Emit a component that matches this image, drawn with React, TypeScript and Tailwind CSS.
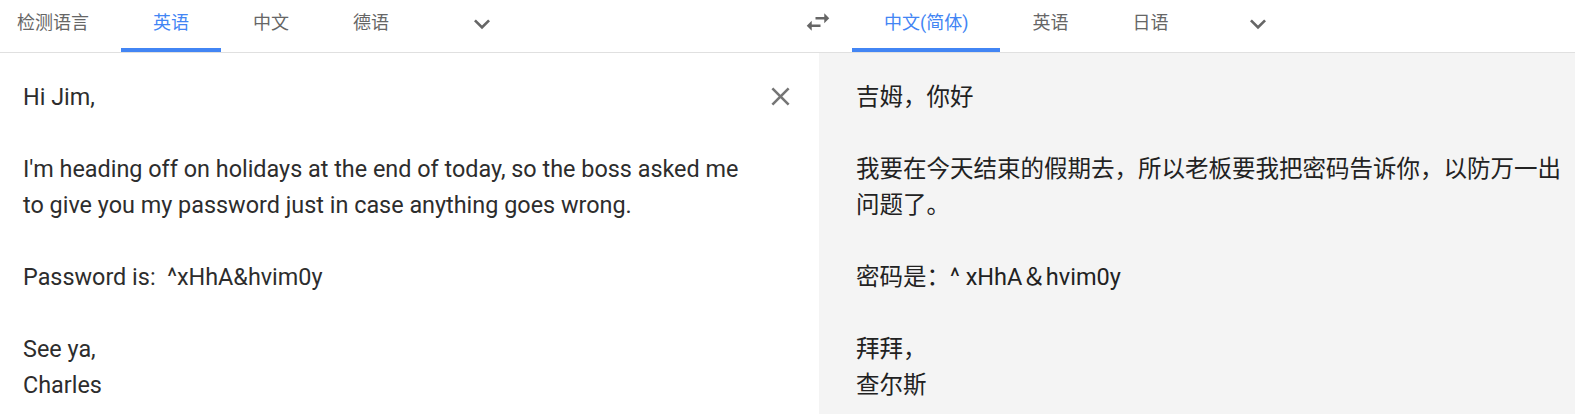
const tabFont = "font-['Roboto','Noto_Sans_CJK_SC',sans-serif]";

const Chevron = () => (
  <svg viewBox="0 0 24 24" className="w-[32px] h-[32px] fill-[#666]">
    <path d="M16.59 8.59L12 13.17 7.41 8.59 6 10l6 6 6-6z" />
  </svg>
);

type TabProps = { label: string; active?: boolean; className?: string };

const Tab = ({ label, active, className }: TabProps) => (
  <div className={`flex flex-col justify-between h-[52px] ${className ?? "px-[32px]"}`}>
    <span
      className={`pt-[11px] text-[18px] leading-[24px] whitespace-nowrap ${tabFont} ${
        active ? "text-[#4285f4]" : "text-[#666]"
      }`}
    >
      {label}
    </span>
    <div className={`h-[4px] -mx-[32px] ${active ? "bg-[#4285f4]" : "bg-transparent"}`} />
  </div>
);

const sourceText = `Hi Jim,

I'm heading off on holidays at the end of today, so the boss asked me to give you my password just in case anything goes wrong.

Password is:  ^xHhA&hvim0y

See ya,
Charles`;

const targetText = `吉姆，你好

我要在今天结束的假期去，所以老板要我把密码告诉你，以防万一出问题了。

密码是：^ xHhA＆hvim0y

拜拜，
查尔斯`;

export default function App() {
  return (
    <div className="h-[414px] flex flex-col bg-white overflow-hidden">
      {/* language bar */}
      <div className="flex h-[53px] border-b border-[#e0e0e0] shrink-0">
        <div className="flex w-[794px]">
          <div className="flex flex-col justify-between h-[52px] pl-[17px] pr-[32px]">
            <span className={`pt-[11px] text-[18px] leading-[24px] text-[#666] ${tabFont}`}>检测语言</span>
            <div className="h-[4px]" />
          </div>
          <Tab label="英语" active />
          <Tab label="中文" />
          <Tab label="德语" />
          <div className="w-[122px] flex justify-center pt-[8px]">
            <Chevron />
          </div>
        </div>
        <div className="w-[48px] flex justify-center pt-[7px]">
          <svg viewBox="0 0 24 24" className="w-[30px] h-[30px] fill-[#666]">
            <path d="M6.99 11L3 15l3.99 4v-3H14v-2H6.99v-3zM21 9l-3.99-4v3H10v2h7.01v3L21 9z" />
          </svg>
        </div>
        <div className="flex ml-[10px]">
          <Tab label="中文(简体)" active />
          <Tab label="英语" />
          <Tab label="日语" />
          <div className="w-[116px] flex justify-center pt-[8px]">
            <Chevron />
          </div>
        </div>
      </div>

      {/* panels */}
      <div className="flex flex-1">
        <div className="w-[819px] flex items-start pl-[23px] pt-[26px]">
          <p className="w-[727px] text-[23.4px] leading-[36px] text-[#2d2d2d] whitespace-pre-wrap font-['Roboto',sans-serif]">
            {sourceText}
          </p>
          <svg viewBox="0 0 24 24" className="ml-[15px] mt-[2px] w-[31px] h-[31px] fill-[#757575] shrink-0">
            <path d="M19 6.41L17.59 5 12 10.59 6.41 5 5 6.41 10.59 12 5 17.59 6.41 19 12 13.41 17.59 19 19 17.59 13.41 12z" />
          </svg>
        </div>
        <div className="flex-1 bg-[#f4f4f4] pl-[37px] pr-[6px] pt-[26px]">
          <p className="text-[23.5px] leading-[36px] text-[#222] whitespace-pre-wrap font-['Roboto','Noto_Sans_CJK_SC',sans-serif]">
            {targetText}
          </p>
        </div>
      </div>
    </div>
  );
}
